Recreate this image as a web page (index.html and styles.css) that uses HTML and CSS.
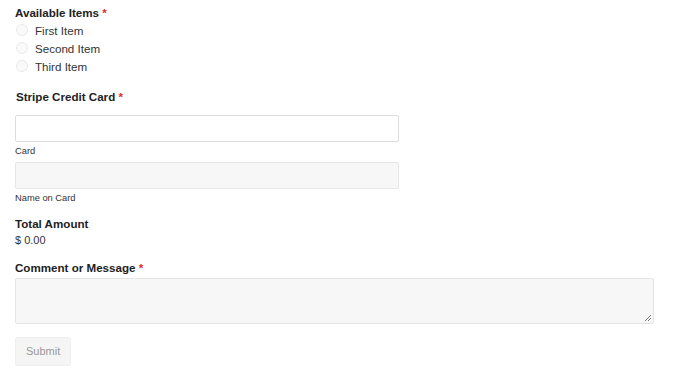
FILE: index.html
```html
<!DOCTYPE html>
<html lang="en">
<head>
  <meta charset="UTF-8" />
  <title>Order Form</title>
  <link rel="stylesheet" href="styles.css">
</head>
<body>
  <form class="form">
    <div class="field">
      <div class="field-label">Available Items <span class="req">*</span></div>
      <label class="choice"><span class="radio"></span>First Item</label>
      <label class="choice"><span class="radio"></span>Second Item</label>
      <label class="choice"><span class="radio"></span>Third Item</label>
    </div>

    <div class="field stripe">
      <div class="field-label">Stripe Credit Card <span class="req">*</span></div>
      <div class="input card-input"></div>
      <div class="sublabel">Card</div>
      <div class="input name-input"></div>
      <div class="sublabel">Name on Card</div>
    </div>

    <div class="field total">
      <div class="field-label">Total Amount</div>
      <div class="amount">$ 0.00</div>
    </div>

    <div class="field comment">
      <div class="field-label">Comment or Message <span class="req">*</span></div>
      <div class="textarea">
        <svg class="grip" width="9" height="9" viewBox="0 0 9 9">
          <path d="M8 2 L2 8 M8 5 L5 8" stroke="#777" stroke-width="1"/>
        </svg>
      </div>
    </div>

    <div class="submit">Submit</div>
  </form>
</body>
</html>
```

FILE: styles.css
```css
body { margin: 0; font-family: "Liberation Sans", Arial, sans-serif; color: #222; background: #fff; }
.form { padding: 5px 15px 0 15px; }
.field-label { font-size: 11.6px; font-weight: bold; line-height: 16px; }
.req { color: #e02b27; }
.choice { display: flex; align-items: center; font-size: 11.6px; color: #333; height: 18px; }
.radio { width: 10px; height: 10px; border: 1px solid #e8e8e8; border-radius: 50%; background: #fafafa; margin: 0 7px 0 1px; }
.stripe { margin-top: 14px; }
.stripe .field-label { margin-left: 1px; margin-bottom: 10px; }
.input { width: 382px; height: 25px; border: 1px solid #ddd; border-radius: 2px; }
.card-input { background: #fff; }
.name-input { background: #f7f7f7; border-color: #e6e6e6; }
.sublabel { font-size: 9.3px; color: #333; margin: 3px 0 5px; line-height: 12px; }
.total { margin-top: 12px; }
.amount { font-size: 11px; color: #333; line-height: 16px; }
.comment { margin-top: 12px; }
.comment .field-label { margin-bottom: 2px; }
.textarea { position: relative; width: 637px; height: 44px; border: 1px solid #e4e4e4; border-radius: 2px; background: #f7f7f7; }
.grip { position: absolute; right: 1px; bottom: 1px; }
.submit { display: inline-block; margin-top: 13px; padding: 0 10px; height: 27px; line-height: 27px; font-size: 11px; color: #999; background: #f5f5f5; border: 1px solid #f0f0f0; border-radius: 2px; }
```
